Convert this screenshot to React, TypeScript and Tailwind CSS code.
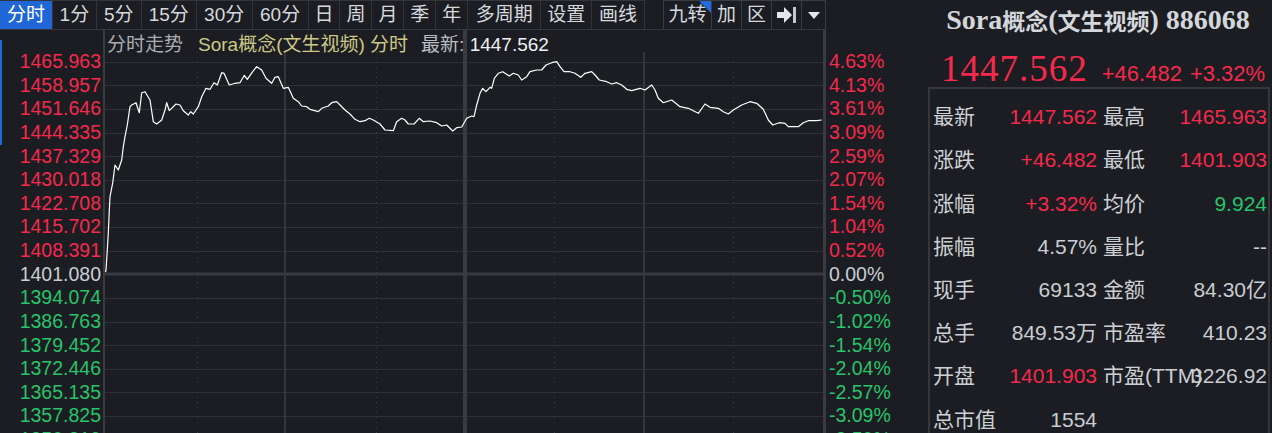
import React from "react";

const FONT = "font-['Liberation_Sans','Noto_Sans_CJK_SC',sans-serif]";
const RED = "text-[#f5294b]";
const GREEN = "text-[#27c46b]";
const GRAY = "text-[#c9cdd2]";

const leftTabs: { t: string; w: string; active?: boolean }[] = [
  { t: "分时", w: "w-[53px]", active: true },
  { t: "1分", w: "w-[44px]" },
  { t: "5分", w: "w-[45px]" },
  { t: "15分", w: "w-[55px]" },
  { t: "30分", w: "w-[56px]" },
  { t: "60分", w: "w-[56px]" },
  { t: "日", w: "w-[32px]" },
  { t: "周", w: "w-[32px]" },
  { t: "月", w: "w-[32px]" },
  { t: "季", w: "w-[32px]" },
  { t: "年", w: "w-[32px]" },
  { t: "多周期", w: "w-[73px]" },
  { t: "设置", w: "w-[51px]" },
  { t: "画线", w: "w-[53px]" },
];

const leftAxis: { v: string; c: string }[] = [
  { v: "1465.963", c: RED },
  { v: "1458.957", c: RED },
  { v: "1451.646", c: RED },
  { v: "1444.335", c: RED },
  { v: "1437.329", c: RED },
  { v: "1430.018", c: RED },
  { v: "1422.708", c: RED },
  { v: "1415.702", c: RED },
  { v: "1408.391", c: RED },
  { v: "1401.080", c: GRAY },
  { v: "1394.074", c: GREEN },
  { v: "1386.763", c: GREEN },
  { v: "1379.452", c: GREEN },
  { v: "1372.446", c: GREEN },
  { v: "1365.135", c: GREEN },
  { v: "1357.825", c: GREEN },
  { v: "1350.819", c: GREEN },
];

const rightAxis: { v: string; c: string }[] = [
  { v: "4.63%", c: RED },
  { v: "4.13%", c: RED },
  { v: "3.61%", c: RED },
  { v: "3.09%", c: RED },
  { v: "2.59%", c: RED },
  { v: "2.07%", c: RED },
  { v: "1.54%", c: RED },
  { v: "1.04%", c: RED },
  { v: "0.52%", c: RED },
  { v: "0.00%", c: GRAY },
  { v: "-0.50%", c: GREEN },
  { v: "-1.02%", c: GREEN },
  { v: "-1.54%", c: GREEN },
  { v: "-2.04%", c: GREEN },
  { v: "-2.57%", c: GREEN },
  { v: "-3.09%", c: GREEN },
  { v: "-3.59%", c: GREEN },
];

const LINE =
  "105.5,272 106,270 107.3,250 108.3,233 109.3,210 110,196.7 112.7,183 115,165 118.3,170 121.7,160 123.3,146.7 125,136.7 127.3,125 130,106.7 131.7,105 136,102.7 139.3,112.7 141.7,92.7 145,91.7 150,100 153.3,121.7 156.7,124 161.7,120 165,110 166.7,102.7 169.3,110.7 176,104 180,105 183.3,110.7 188.3,115 190.7,111.7 193.3,114 198.3,106.7 201.7,96.7 206,88.3 210,89.3 214,82.7 217.3,85 221.7,72.7 224,73.3 229.3,85 235,83.3 240,82.7 244.3,75.3 247.3,79.3 252.7,71.7 256.7,66.7 261.7,70 266,78.3 271.7,83.3 275,77.3 278.3,76.7 283.3,88.3 288.3,87.3 293.3,98.3 298.3,101.7 301.7,106 306.7,106.7 310,109.3 318.3,111.7 321.7,108.3 328.3,106 331.7,102.7 336.7,101.7 340,105 345,110 350,114 355,119.3 360,121.7 365,120.7 369.3,118.3 373.3,120 380,124 385,130 393.3,130.7 396.7,121.7 401.7,118.3 405,120 408.3,124 414,124 419.3,118.3 423.3,121.7 430,121 436.7,122.7 441.7,126 446.7,125 452.7,131 456.7,127.7 461.7,127 " +
  "466.7,118.3 471.7,116 474,116.7 476.7,105 480,93.3 482.7,88.3 486,91.7 490,87.3 491.7,88.3 494.3,78.3 498.3,73.3 502.7,71.7 509.3,76 513.3,73.3 518.3,75 521.7,80 526.7,76.7 530,71.7 536.7,70 541.7,70 546,65 551.7,62.7 556.7,61.7 560,66.7 564,71.7 570,71.7 575,73.3 580.7,77.3 585,73.3 591.7,71.7 595,75 599.3,80 606.7,81.7 611.7,84 616.7,82.7 621.7,85 626.7,89.3 631.7,90.7 640,88.3 645,90 651.7,85 655,90 658.3,98.3 663.3,102.7 671.7,100 680,106.7 688.3,108.3 698.3,113.3 705,104 710,107.3 718.3,108.3 723.3,111.7 728.3,114 733.3,110 741.7,105 750,101.7 756.7,103.3 763.3,109.3 768.3,120 772.7,125 779.3,122.7 785,123.3 788.3,126.7 798.3,126.7 803.3,122.7 808.3,120.7 816.7,120.7 821.7,120";

function Toolbar() {
  return (
    <div className="h-[30px] w-[826px] flex border-b border-[#34363c] text-[19px] text-[#d5d9de]">
      {leftTabs.map((tab) => (
        <div
          key={tab.t}
          className={`${tab.w} h-full flex items-center justify-center border-t border-r border-[#33353b] ${
            tab.active ? "bg-[#1f66d6] text-white" : ""
          }`}
        >
          {tab.t}
        </div>
      ))}
      <div className="ml-[18px] flex h-full border-l border-t border-[#3a3c42]">
        <div className="relative w-[48px] h-full flex items-center justify-center border-r border-[#3a3c42]">
          九转
          <svg className="absolute top-0 right-0" width="12" height="12" viewBox="0 0 12 12">
            <polygon points="0,0 12,0 12,12" fill="#1f6be0" />
          </svg>
        </div>
        <div className="w-[30px] h-full flex items-center justify-center border-r border-[#3a3c42]">加</div>
        <div className="w-[30px] h-full flex items-center justify-center border-r border-[#3a3c42]">区</div>
        <div className="w-[30px] h-full flex items-center justify-center border-r border-[#3a3c42]">
          <svg width="20" height="16" viewBox="0 0 20 16">
            <polygon points="0,5 7,5 7,0 15,8 7,16 7,11 0,11" fill="#e4e6e9" />
            <rect x="16" y="0" width="3" height="16" fill="#c4c7cc" />
          </svg>
        </div>
        <div className="w-[24px] h-full flex items-center justify-center border-r border-[#3a3c42]">
          <svg width="12" height="7" viewBox="0 0 12 7">
            <polygon points="0,0 12,0 6,7" fill="#e4e6e9" />
          </svg>
        </div>
      </div>
    </div>
  );
}

function Grid() {
  const hs: number[] = [];
  for (let i = 0; i < 17; i++) hs.push(Math.round(61.7 + 23.62 * i) + 0.5);
  return (
    <svg
      className="absolute inset-0"
      width="718"
      height="403"
      viewBox="105 30 718 403"
    >
      {hs.map((y, i) =>
        i === 9 ? (
          <line key={i} x1="105" x2="823" y1={274} y2={274} stroke="#383a40" strokeWidth="3" />
        ) : (
          <line key={i} x1="105" x2="823" y1={y} y2={y} stroke="#2f3137" strokeWidth="1" />
        )
      )}
      {[197, 376, 554, 733].map((x) => (
        <line key={x} x1={x + 0.5} x2={x + 0.5} y1="52" y2="433" stroke="#3a3c42" strokeWidth="1" strokeDasharray="1 4" />
      ))}
      <line x1="285" x2="285" y1="52" y2="433" stroke="#34363c" strokeWidth="2" />
      <line x1="644" x2="644" y1="52" y2="433" stroke="#34363c" strokeWidth="2" />
      <line x1="465" x2="465" y1="30" y2="433" stroke="#393b41" strokeWidth="4" />
      <polyline points={LINE} fill="none" stroke="#ffffff" strokeWidth="1.2" strokeLinejoin="round" />
    </svg>
  );
}

function ChartArea() {
  return (
    <div className="flex flex-1">
      <div className="w-[103px] pt-[20px] flex flex-col items-end pr-[2px] text-[19.5px]">
        {leftAxis.map((a) => (
          <div key={a.v} className={`h-[23.62px] flex items-center shrink-0 ${a.c}`}>
            {a.v}
          </div>
        ))}
      </div>
      <div className="relative w-[723px] border-l-2 border-r-[3px] border-[#393b41] overflow-hidden">
        <Grid />
        <div className="relative h-[31px] flex items-center pl-[2px] text-[19px] whitespace-nowrap">
          <span className="text-[#a9adb2]">分时走势</span>
          <span className="ml-[15px] text-[#cdc886]">Sora概念(文生视频) 分时</span>
          <span className="ml-[13px] text-[#b9bdc2]">最新: </span>
          <span className="text-[#eef0f2]">&nbsp;1447.562</span>
        </div>
      </div>
      <div className="w-[102px] pt-[20px] pl-[3px] flex flex-col text-[19.5px]">
        {rightAxis.map((a) => (
          <div key={a.v} className={`h-[23.62px] flex items-center shrink-0 ${a.c}`}>
            {a.v}
          </div>
        ))}
      </div>
    </div>
  );
}

type Cell = { l: string; v: string; c: string };
const rows: [Cell, Cell | null][] = [
  [{ l: "最新", v: "1447.562", c: RED }, { l: "最高", v: "1465.963", c: RED }],
  [{ l: "涨跌", v: "+46.482", c: RED }, { l: "最低", v: "1401.903", c: RED }],
  [{ l: "涨幅", v: "+3.32%", c: RED }, { l: "均价", v: "9.924", c: GREEN }],
  [{ l: "振幅", v: "4.57%", c: GRAY }, { l: "量比", v: "--", c: GRAY }],
  [{ l: "现手", v: "69133", c: GRAY }, { l: "金额", v: "84.30亿", c: GRAY }],
  [{ l: "总手", v: "849.53万", c: GRAY }, { l: "市盈率", v: "410.23", c: GRAY }],
  [{ l: "开盘", v: "1401.903", c: RED }, { l: "市盈(TTM)", v: "3226.92", c: GRAY }],
  [{ l: "总市值", v: "1554", c: GRAY }, null],
];

function Pair({ cell }: { cell: Cell }) {
  return (
    <div className="w-[164px] grid whitespace-nowrap">
      <span className="col-start-1 row-start-1 justify-self-start text-[#cdd0d4]">{cell.l}</span>
      <span className={`col-start-1 row-start-1 justify-self-end ${cell.c}`}>{cell.v}</span>
    </div>
  );
}

function RightPanel() {
  return (
    <div className="w-[344px] flex flex-col">
      <div className="h-[40px] w-[340px] flex items-center justify-center font-['Liberation_Serif','Noto_Sans_CJK_SC',serif] font-bold text-[28px] text-[#d3d6da] whitespace-nowrap">
        <span>Sora</span>
        <span className="text-[23px] font-['Noto_Sans_CJK_SC',sans-serif] font-bold">概念</span>
        <span>(</span>
        <span className="text-[23px] font-['Noto_Sans_CJK_SC',sans-serif] font-bold">文生视频</span>
        <span>) 886068</span>
      </div>
      <div className={`h-[50px] pt-[10px] pl-[13px] flex items-baseline whitespace-nowrap ${RED}`}>
        <span className="font-['Liberation_Serif',serif] text-[37px] leading-none tracking-[1px]">1447.562</span>
        <span className="ml-[14px] text-[22px] leading-none">+46.482</span>
        <span className="ml-[8px] text-[22px] leading-none">+3.32%</span>
      </div>
      <div className="w-[342px] flex-1 border-2 border-b-0 border-[#35373d] pt-[6.4px] pl-[3px] text-[21px]">
        {rows.map((r, i) => (
          <div key={i} className="h-[43.2px] flex items-center gap-[6px]">
            <Pair cell={r[0]} />
            {r[1] && <Pair cell={r[1]} />}
          </div>
        ))}
      </div>
    </div>
  );
}

export default function App() {
  return (
    <div className={`relative w-[1272px] h-[433px] overflow-hidden bg-[#1b1d22] flex ${FONT}`}>
      <div className="w-[928px] shrink-0 flex flex-col">
        <Toolbar />
        <ChartArea />
      </div>
      <RightPanel />
      <div className="absolute left-0 top-[40px] w-[2px] h-[105px] bg-[#1f66d6]" />
    </div>
  );
}
